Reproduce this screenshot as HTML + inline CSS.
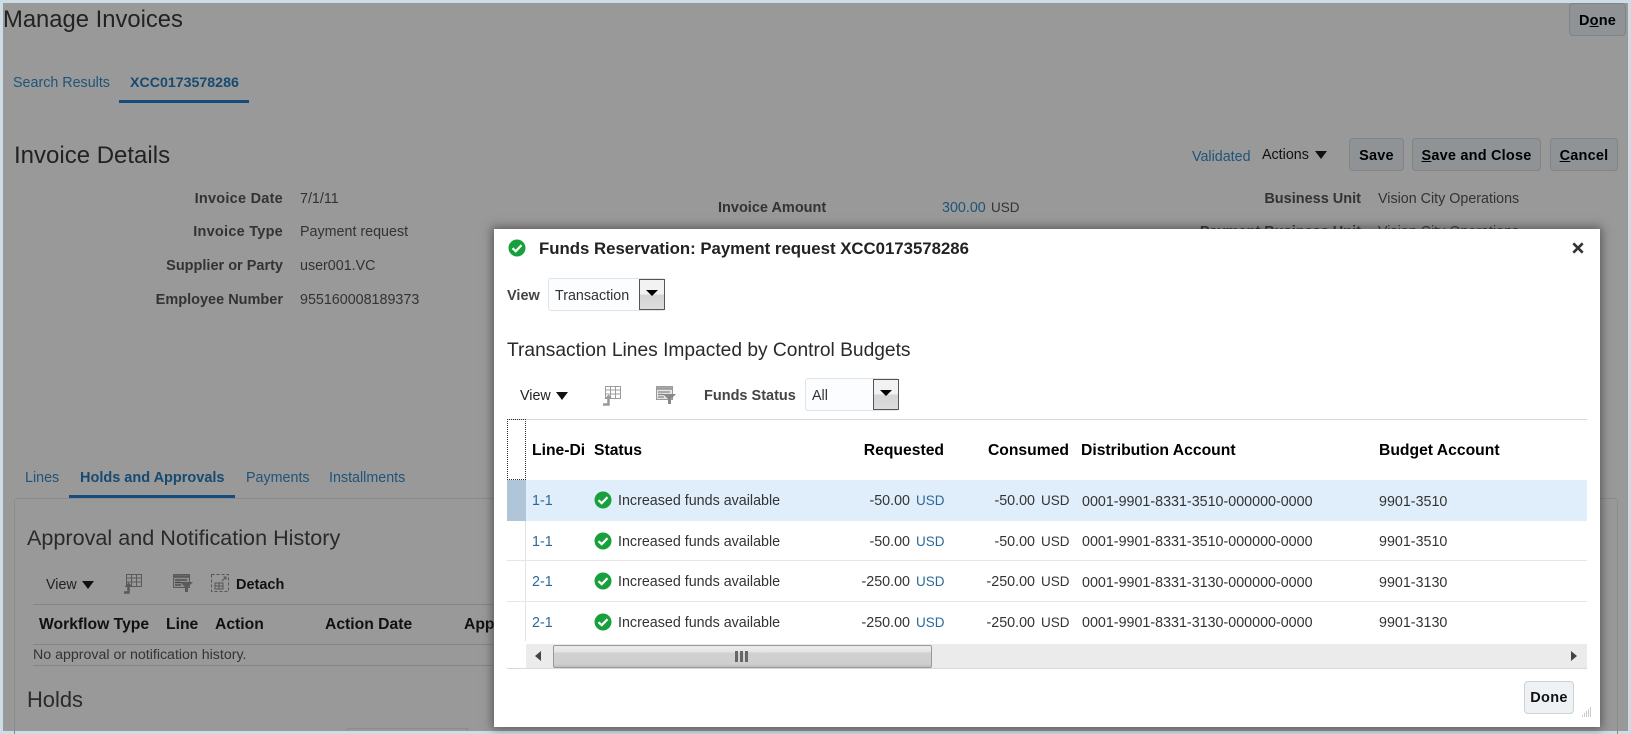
<!DOCTYPE html>
<html><head><meta charset="utf-8"><title>Manage Invoices</title>
<style>
html,body{margin:0;padding:0;width:1631px;height:734px;overflow:hidden;background:#cddde6}
body{position:relative;font-family:"Liberation Sans",Arial,sans-serif}
.t{position:absolute;white-space:nowrap;line-height:20px;font-size:14.3px;color:#333;margin-top:1px}
.b{font-weight:bold;font-size:14.5px}
.l{color:#1f5478}
.m{color:#2b6a98}
.u{font-size:13.5px;line-height:19px}
.r{text-align:right}
.h{font-weight:bold;font-size:15.7px;color:#000}
.a{position:absolute}
.btn{position:absolute;box-sizing:border-box;border:1px solid #7f8488;border-radius:4px;background:#8f9396;font-weight:bold;font-size:14.5px;color:#000;text-align:center;letter-spacing:.2px}
#bg{position:absolute;left:3px;top:3px;width:1625px;height:728px;background:#999;overflow:hidden}
#modal{position:absolute;left:494px;top:229px;width:1106px;height:498px;background:#fff;box-shadow:0 0 9px 2px rgba(40,40,40,.55)}
.sel{position:absolute;box-sizing:border-box;border:1px solid #dfe4e8;border-radius:3px;background:#fcfdfe}
.dd{position:absolute;box-sizing:border-box;border:1px solid #555;background:linear-gradient(#f2f2f2 0,#f2f2f2 50%,#d4d4d4 50%,#dcdcdc 100%)}
.dd:after{content:"";position:absolute;left:6px;top:10px;border:6px solid transparent;border-top:6px solid #000;border-bottom:0}
.tri{position:absolute;width:0;height:0;border-left:6px solid transparent;border-right:6px solid transparent;border-top:8px solid #111}
.line{position:absolute;height:1px}
svg{position:absolute;overflow:visible}
</style></head><body>
<div id="bg"></div>

<!-- page behind -->
<div class="t" style="left:3px;top:9px;font-size:23.800px;line-height:20px;color:#222">Manage Invoices</div>
<div class="t l" style="left:13px;top:72px">Search Results</div>
<div class="t l b" style="left:130px;top:72px;font-size:14.200px;color:#174a70">XCC0173578286</div>
<div class="a" style="left:119px;top:100px;width:130px;height:3px;background:#134c7d"></div>
<div class="t" style="left:14px;top:145px;font-size:24px;color:#222">Invoice Details</div>

<div class="t b r" style="left:83px;width:200px;top:188px;letter-spacing:.25px">Invoice Date</div><div class="t" style="left:300px;top:188px">7/1/11</div>
<div class="t b r" style="left:83px;width:200px;top:221px;letter-spacing:.25px">Invoice Type</div><div class="t" style="left:300px;top:221px">Payment request</div>
<div class="t b r" style="left:83px;width:200px;top:255px">Supplier or Party</div><div class="t" style="left:300px;top:255px">user001.VC</div>
<div class="t b r" style="left:83px;width:200px;top:289px">Employee Number</div><div class="t" style="left:300px;top:289px">955160008189373</div>

<div class="t b" style="left:718px;top:197px">Invoice Amount</div>
<div class="t l" style="left:942px;top:197px">300.00</div><div class="t u" style="left:991px;top:197px">USD</div>

<div class="btn" style="left:1569px;top:3px;width:57px;height:33px;line-height:35px">D<u>o</u>ne</div>
<div class="t l" style="left:1192px;top:146px">Validated</div>
<div class="t" style="left:1262px;top:144px;color:#111">Actions</div>
<div class="tri" style="left:1315px;top:151px"></div>
<div class="btn" style="left:1349px;top:138px;width:55px;height:33px;line-height:35px">Save</div>
<div class="btn" style="left:1412px;top:138px;width:129px;height:33px;line-height:35px"><u>S</u>ave and Close</div>
<div class="btn" style="left:1550px;top:138px;width:68px;height:33px;line-height:35px"><u>C</u>ancel</div>
<div class="t b r" style="left:1161px;width:200px;top:188px">Business Unit</div><div class="t" style="left:1378px;top:188px">Vision City Operations</div>
<div class="t b r" style="left:1161px;width:200px;top:221px">Payment Business Unit</div><div class="t" style="left:1378px;top:221px">Vision City Operations</div>

<div class="t l" style="left:25px;top:467px">Lines</div>
<div class="t l b" style="left:80px;top:467px;color:#174a70">Holds and Approvals</div>
<div class="t l" style="left:246px;top:467px">Payments</div>
<div class="t l" style="left:329px;top:467px">Installments</div>
<div class="a" style="left:14px;top:498px;width:1604px;height:240px;box-sizing:border-box;border:1px solid #8b8b8b;border-radius:3px"></div>
<div class="a" style="left:69px;top:495px;width:166px;height:3px;background:#134c7d"></div>
<div class="t" style="left:27px;top:527px;font-size:21.600px;color:#2a2a2a">Approval and Notification History</div>
<div class="t" style="left:46px;top:574px;color:#222">View</div>
<div class="tri" style="left:82px;top:581px"></div>
<svg style="left:122px;top:574px" width="22" height="22" viewBox="0 0 22 22"><g fill="none" stroke="#5a5a5a"><rect x="4.500" y="0.500" width="15" height="12"/><path d="M4.500 4h15M4.500 8h15M9.500 .5v12M14.500 .5v12"/></g><path d="M2 18.500h4.500v-6" fill="none" stroke="#5a5a5a" stroke-width="2.500"/><path d="M2.500 13l4-4.500 4 4.500z" fill="#5a5a5a"/></svg>
<svg style="left:173px;top:574px" width="20" height="20" viewBox="0 0 20 20"><rect x="0.500" y="0.500" width="16" height="13" fill="#8e8e8e" stroke="#5a5a5a"/><path d="M1 2.500h15" stroke="#5a5a5a" stroke-width="2.500"/><path d="M2 6h12M2 8.500h6M2 11h6" stroke="#444" stroke-width="1.200"/><path d="M7 8h13l-5 5v5h-3v-5z" fill="#5a5a5a"/></svg>
<svg style="left:211px;top:574px" width="19" height="19" viewBox="0 0 19 19"><rect x="0.500" y="0.500" width="17" height="17" fill="none" stroke="#555" stroke-dasharray="3 2"/><rect x="4" y="9" width="8" height="6" fill="none" stroke="#555"/><path d="M4 12h8M8 9v6" stroke="#555"/><path d="M11 7l4-4M12.500 3H15v2.500" fill="none" stroke="#555"/></svg>
<div class="t b" style="left:236px;top:574px;color:#111">Detach</div>
<div class="line" style="left:33px;top:604px;width:470px;background:#848484"></div>
<div class="t h" style="left:39px;top:614px;color:#111">Workflow Type</div>
<div class="t h" style="left:166px;top:614px;color:#111">Line</div>
<div class="t h" style="left:215px;top:614px;color:#111">Action</div>
<div class="t h" style="left:325px;top:614px;color:#111">Action Date</div>
<div class="t h" style="left:464px;top:614px;color:#111">Approver</div>
<div class="line" style="left:33px;top:644px;width:470px;background:#848484"></div>
<div class="t" style="left:33px;top:644px;font-size:14.200px">No approval or notification history.</div>
<div class="line" style="left:33px;top:665px;width:470px;background:#848484"></div>
<div class="t" style="left:27px;top:689px;font-size:21.900px;color:#2a2a2a">Holds</div>
<div class="a" style="left:347px;top:728px;width:121px;height:3px;border:1px solid #8b8b8b;border-bottom:0;box-sizing:border-box"></div>

<!-- modal -->
<div id="modal"></div>
<svg style="left:508px;top:239px" width="18" height="18" viewBox="0 0 18 18"><circle cx="9" cy="9" r="8.500" fill="#17a03c"/><path d="M4.500 9.200l3.200 3 5.800-6" fill="none" stroke="#fff" stroke-width="2.200"/></svg>
<div class="t b" style="left:539px;top:238px;font-size:16.800px;color:#222">Funds Reservation: Payment request XCC0173578286</div>
<svg style="left:1572px;top:242px" width="12" height="12" viewBox="0 0 12 12"><path d="M1.300 1.300l9.400 9.400M10.700 1.300l-9.400 9.400" stroke="#333" stroke-width="2.600"/></svg>

<div class="t b" style="left:507px;top:285px;color:#444">View</div>
<div class="sel" style="left:548px;top:278px;width:117px;height:33px"></div>
<div class="t" style="left:555px;top:285px">Transaction</div>
<div class="dd" style="left:639px;top:279px;width:26px;height:31px"></div>

<div class="t" style="left:507px;top:340px;font-size:19.200px;color:#2a2a2a">Transaction Lines Impacted by Control Budgets</div>

<div class="t" style="left:520px;top:385px;color:#222">View</div>
<div class="tri" style="left:556px;top:392px"></div>
<svg style="left:602px;top:386px" width="22" height="22" viewBox="0 0 22 22"><g fill="none" stroke="#9c9c9c"><rect x="3.500" y="0.500" width="15" height="12"/><path d="M3.500 4h15M3.500 8h15M8.500 .5v12M13.500 .5v12"/></g><path d="M1 18.500h5.500v-6" fill="none" stroke="#999" stroke-width="2.500"/><path d="M2.500 13l4-4.500 4 4.500z" fill="#999"/></svg>
<svg style="left:656px;top:386px" width="20" height="20" viewBox="0 0 20 20"><rect x="0.500" y="0.500" width="16" height="13" fill="#e4e4e4" stroke="#999"/><path d="M1 2.500h15" stroke="#999" stroke-width="2.500"/><path d="M2 6h12M2 8.500h6M2 11h6" stroke="#888" stroke-width="1.200"/><path d="M7 8h13l-5 5v5h-3v-5z" fill="#888"/></svg>
<div class="t b" style="left:704px;top:385px;color:#444">Funds Status</div>
<div class="sel" style="left:805px;top:378px;width:94px;height:33px"></div>
<div class="t" style="left:812px;top:385px">All</div>
<div class="dd" style="left:873px;top:379px;width:26px;height:31px"></div>

<div class="line" style="left:507px;top:419px;width:1080px;background:#d8d8d8"></div>
<div class="a" style="left:507px;top:419px;width:19px;height:61px;box-sizing:border-box;border:1px dotted #333"></div>
<div class="a" style="left:532px;top:440px;width:54px;height:22px;overflow:hidden"><div class="t h" style="left:0;top:0">Line-Display</div></div>
<div class="t h" style="left:594px;top:440px">Status</div>
<div class="t h r" style="left:744px;width:200px;top:440px">Requested</div>
<div class="t h r" style="left:869px;width:200px;top:440px">Consumed</div>
<div class="t h" style="left:1081px;top:440px">Distribution Account</div>
<div class="t h" style="left:1379px;top:440px">Budget Account</div>

<div class="a" style="left:526px;top:480px;width:1061px;height:41px;background:#e0eefb"></div>
<div class="a" style="left:507px;top:480px;width:19px;height:41px;background:#b0c6d8"></div>
<div class="a" style="left:525px;top:521px;width:1px;height:120px;background:#dde3e8"></div>
<div class="line" style="left:507px;top:560px;width:1080px;background:#e6e6e6"></div>
<div class="line" style="left:507px;top:601px;width:1080px;background:#e6e6e6"></div>

<!-- row 1 -->
<div class="t m" style="left:532px;top:490px">1-1</div>
<svg style="left:594px;top:491px" width="18" height="18" viewBox="0 0 18 18"><circle cx="9" cy="9" r="8.500" fill="#17a03c"/><path d="M4.500 9.200l3.200 3 5.800-6" fill="none" stroke="#fff" stroke-width="2.200"/></svg>
<div class="t" style="left:618px;top:490px">Increased funds available</div>
<div class="t r" style="left:810px;width:100px;top:490px">-50.00</div><div class="t m u" style="left:916px;top:490px">USD</div>
<div class="t r" style="left:935px;width:100px;top:490px">-50.00</div><div class="t u" style="left:1041px;top:490px">USD</div>
<div class="t" style="left:1082px;top:491px">0001-9901-8331-3510-000000-0000</div>
<div class="t" style="left:1379px;top:491px">9901-3510</div>
<!-- row 2 -->
<div class="t m" style="left:532px;top:531px">1-1</div>
<svg style="left:594px;top:532px" width="18" height="18" viewBox="0 0 18 18"><circle cx="9" cy="9" r="8.500" fill="#17a03c"/><path d="M4.500 9.200l3.200 3 5.800-6" fill="none" stroke="#fff" stroke-width="2.200"/></svg>
<div class="t" style="left:618px;top:531px">Increased funds available</div>
<div class="t r" style="left:810px;width:100px;top:531px">-50.00</div><div class="t m u" style="left:916px;top:531px">USD</div>
<div class="t r" style="left:935px;width:100px;top:531px">-50.00</div><div class="t u" style="left:1041px;top:531px">USD</div>
<div class="t" style="left:1082px;top:531px">0001-9901-8331-3510-000000-0000</div>
<div class="t" style="left:1379px;top:531px">9901-3510</div>
<!-- row 3 -->
<div class="t m" style="left:532px;top:571px">2-1</div>
<svg style="left:594px;top:572px" width="18" height="18" viewBox="0 0 18 18"><circle cx="9" cy="9" r="8.500" fill="#17a03c"/><path d="M4.500 9.200l3.200 3 5.800-6" fill="none" stroke="#fff" stroke-width="2.200"/></svg>
<div class="t" style="left:618px;top:571px">Increased funds available</div>
<div class="t r" style="left:810px;width:100px;top:571px">-250.00</div><div class="t m u" style="left:916px;top:571px">USD</div>
<div class="t r" style="left:935px;width:100px;top:571px">-250.00</div><div class="t u" style="left:1041px;top:571px">USD</div>
<div class="t" style="left:1082px;top:572px">0001-9901-8331-3130-000000-0000</div>
<div class="t" style="left:1379px;top:572px">9901-3130</div>
<!-- row 4 -->
<div class="t m" style="left:532px;top:612px">2-1</div>
<svg style="left:594px;top:613px" width="18" height="18" viewBox="0 0 18 18"><circle cx="9" cy="9" r="8.500" fill="#17a03c"/><path d="M4.500 9.200l3.200 3 5.800-6" fill="none" stroke="#fff" stroke-width="2.200"/></svg>
<div class="t" style="left:618px;top:612px">Increased funds available</div>
<div class="t r" style="left:810px;width:100px;top:612px">-250.00</div><div class="t m u" style="left:916px;top:612px">USD</div>
<div class="t r" style="left:935px;width:100px;top:612px">-250.00</div><div class="t u" style="left:1041px;top:612px">USD</div>
<div class="t" style="left:1082px;top:612px">0001-9901-8331-3130-000000-0000</div>
<div class="t" style="left:1379px;top:612px">9901-3130</div>

<!-- scrollbar -->
<div class="a" style="left:526px;top:644px;width:1061px;height:24px;background:#ebebeb"></div>
<div class="line" style="left:507px;top:668px;width:1080px;background:#d8d8d8"></div>
<div class="a" style="left:553px;top:645px;width:379px;height:23px;box-sizing:border-box;border:1px solid #999;border-radius:2px;background:linear-gradient(#ececec 0,#e4e4e4 30%,#d0d0d1 32%,#cfcfd0 85%,#bdbdbd 100%)"></div>
<div class="a" style="left:735px;top:651px;width:3px;height:11px;background:#666"></div>
<div class="a" style="left:740px;top:651px;width:3px;height:11px;background:#666"></div>
<div class="a" style="left:745px;top:651px;width:3px;height:11px;background:#666"></div>
<div class="a" style="left:535px;top:651px;width:0;height:0;border-top:5.500px solid transparent;border-bottom:5.500px solid transparent;border-right:6px solid #444"></div>
<div class="a" style="left:1571px;top:651px;width:0;height:0;border-top:5.500px solid transparent;border-bottom:5.500px solid transparent;border-left:6px solid #444"></div>

<div class="a" style="left:1524px;top:681px;width:50px;height:33px;box-sizing:border-box;border:1px solid #ccd2d6;border-radius:4px;background:#eef2f5;font-weight:bold;font-size:14.500px;color:#111;text-align:center;line-height:33px;letter-spacing:.3px">Done</div>
<svg style="left:1581px;top:707px" width="11" height="11" viewBox="0 0 11 11"><path d="M9 1h1M9 3h1M7 3h1M9 5h1M7 5h1M5 5h1M9 7h1M7 7h1M5 7h1M3 7h1M9 9h1M7 9h1M5 9h1M3 9h1M1 9h1" stroke="#aaa" stroke-width="1.200"/></svg>
</body></html>
